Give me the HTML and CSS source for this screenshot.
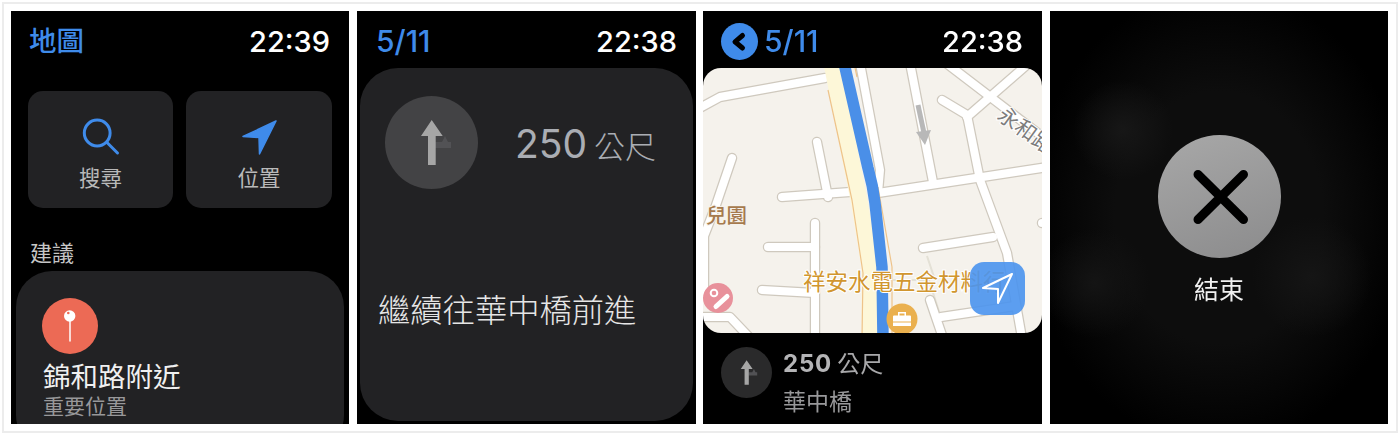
FILE: index.html
```html
<!DOCTYPE html>
<html lang="zh-Hant">
<head>
<meta charset="utf-8">
<title>Apple Watch 地圖</title>
<link rel="stylesheet" href="styles.css">
</head>
<body>
<svg class="defs" width="0" height="0" aria-hidden="true">
  <symbol id="turn" viewBox="0 0 93 93">
    <path class="turn-stub" d="M50 46h16v6H50z M57 46l3-6 3 6z"/>
    <path class="turn-arrow" d="M46.700 24 57.700 40H50.700V69H43V40H36Z"/>
  </symbol>
</svg>
<main class="frame">
  <section class="panel">
    <header class="bar">
      <span class="title strong">地圖</span>
      <span class="time">22:39</span>
    </header>
    <div class="actions">
      <div class="action">
        <svg class="action-icon" viewBox="0 0 40 40"><circle class="stroke-blue" cx="16.200" cy="16" r="12.900"/><path class="stroke-blue" d="M26 25.500 36.500 36"/></svg>
        <span>搜尋</span>
      </div>
      <div class="action">
        <svg class="action-icon" viewBox="0 0 40 40"><path class="fill-blue" d="M37 4 4 19.500 20 20.500 20.500 37Z"/></svg>
        <span>位置</span>
      </div>
    </div>
    <h2 class="section">建議</h2>
    <article class="suggestion">
      <div class="pin">
        <svg viewBox="0 0 56 56"><path class="pin-needle" d="M28 22V43"/><circle class="pin-head" cx="27.700" cy="18" r="5.700"/><circle class="pin-glint" cx="26.300" cy="15" r="1.300"/></svg>
      </div>
      <div class="place">錦和路附近</div>
      <div class="place-sub">重要位置</div>
    </article>
  </section>

  <section class="panel panel-wide">
    <header class="bar">
      <span class="title">5/11</span>
      <span class="time">22:38</span>
    </header>
    <article class="step">
      <div class="step-top">
        <div class="step-circle"><svg viewBox="0 0 93 93"><use href="#turn"/></svg></div>
        <div class="step-dist">250<span class="step-unit">公尺</span></div>
      </div>
      <p class="step-text">繼續往華中橋前進</p>
    </article>
  </section>

  <section class="panel panel-wide">
    <header class="bar bar-back">
      <span class="back"><svg viewBox="0 0 37 37"><path d="M21.500 12.500 14 18.800 21.500 25"/></svg></span>
      <span class="title">5/11</span>
      <span class="time">22:38</span>
    </header>
    <div class="map">
      <svg class="map-art" viewBox="0 0 339 265">
        <defs>
          <g id="roads">
            <path d="M-5 41 17 29 122 10"/>
            <path d="M29 90 12 140 1 168V225"/>
            <path d="M114 74 125 129"/>
            <path d="M79 129 147 124"/>
            <path d="M157 -5 177 102 175 125"/>
            <path d="M175 125 345 99"/>
            <path d="M207 -5 230 114"/>
            <path d="M243 -5 345 73"/>
            <path d="M326 -5 264 49"/>
            <path d="M239 32 264 47 277 112 304 185 319 270"/>
            <path d="M345 155H339"/>
            <path d="M220 180 290 169"/>
            <path d="M112 155V270"/>
            <path d="M65 179H112"/>
            <path d="M59 222 112 225"/>
            <path d="M-5 249H27L47 270"/>
            <path d="M227 232 240 270"/>
            <path d="M238 249 312 238"/>
          </g>
        </defs>
        <rect class="map-ground" width="339" height="265"/>
        <path class="road-faint" d="M224 188 232 212 M190 212H226L238 250"/>
        <use class="road-casing" href="#roads"/>
        <use class="road-fill" href="#roads"/>
        <path class="highway" d="M129 -5 147 87 156 132 167 199V270"/>
        <path class="highway-edge" d="M125 22 144 109 149 132 160 205 159 270 M175 119 189 199V270 M151 -5 154 9"/>
        <path class="route" d="M141 -5 165 100Q170 118 172 135L179 199 180 270"/>
        <path class="map-arrow-shaft" d="M215 37 221 65"/>
        <path class="map-arrow-head" d="M213 64 228 62 222 77Z"/>
        <text class="label-park" x="3" y="155">兒園</text>
        <text class="label-road" transform="translate(293 50) rotate(36)">永和路</text>
        <text class="label-shop" x="100" y="222">祥安水電五金材料行</text>
        <circle class="poi-pharmacy" cx="15" cy="230" r="15"/>
        <path class="poi-pill" d="M13 238.500 24 228.500"/>
        <circle class="poi-dot" cx="11" cy="225" r="3.300"/>
        <circle class="poi-shop" cx="199" cy="251" r="15.500"/>
        <path class="poi-bag" d="M191 247.500h16a1 1 0 0 1 1 1v5h-18v-5a1 1 0 0 1 1-1z M190 254.500h18v3.500h-18z M195 247.500v-3.500h8v3.500h-1.500v-2h-5v2z"/>
      </svg>
      <div class="locate">
        <svg viewBox="0 0 55 53"><path d="M42 12 13 26 28 27 28 41Z"/></svg>
      </div>
    </div>
    <div class="next">
      <div class="next-circle"><svg viewBox="0 0 93 93"><use href="#turn"/></svg></div>
      <div class="next-body">
        <div class="next-dist"><b>250</b> 公尺</div>
        <div class="next-name">華中橋</div>
      </div>
    </div>
  </section>

  <section class="panel panel-end">
    <div class="end-btn">
      <svg viewBox="0 0 123 123"><path d="M40 39.500 85.500 84.500M85.500 39.500 40 84.500"/></svg>
    </div>
    <div class="end-label">結束</div>
  </section>
</main>
</body>
</html>
```

FILE: styles.css
```css
* { box-sizing: border-box; }
html, body { margin: 0; padding: 0; background: #fff; }
body {
  width: 1400px;
  height: 435px;
  overflow: hidden;
  font-family: "Noto Sans CJK TC", "Noto Sans", sans-serif;
}
.defs { position: absolute; }
.frame {
  display: flex;
  gap: 8px;
  width: 1396px;
  height: 431px;
  margin: 2px;
  padding: 7px 8px 7px 7px;
  border: 2px solid #ececec;
  filter: blur(0.35px);
}
.panel {
  flex: 0 0 338px;
  height: 413px;
  background: #000;
  overflow: hidden;
  color: #fff;
}
.panel-wide { flex-basis: 339px; margin-right: -1px; }
.panel-wide + .panel-wide { margin-right: 0; }
.bar {
  display: flex;
  align-items: center;
  justify-content: space-between;
  height: 57px;
  padding: 3px 19px 0;
}
.title {
  color: #3f8bea;
  font: 500 30px/1 Inter, "Noto Sans CJK TC", sans-serif;
}
.title.strong {
  margin: 0 0 2px -1px;
  font-family: "Noto Sans CJK TC", sans-serif;
  font-weight: 500;
  font-size: 27.500px;
}
.time {
  font: 500 29px/1 Inter, sans-serif;
}

/* panel 1 */
.actions {
  display: grid;
  grid-template-columns: 145px 146px;
  gap: 13px;
  margin: 23px 0 0 17px;
}
.action {
  display: flex;
  flex-direction: column;
  align-items: center;
  height: 117px;
  padding-top: 26px;
  border-radius: 15px;
  background: #222224;
  color: #b9b9b9;
  font-size: 21.500px;
  line-height: 30px;
}
.action-icon { width: 40px; height: 40px; margin-bottom: 5px; }
.stroke-blue { fill: none; stroke: #3f8bea; stroke-width: 3; stroke-linecap: round; }
.fill-blue { fill: #3f8bea; stroke: #3f8bea; stroke-width: 1.500; stroke-linejoin: round; }
.section {
  margin: 28px 0 0 19px;
  color: #c6c6c6;
  font-size: 22px;
  font-weight: 400;
  line-height: 30px;
}
.suggestion {
  height: 180px;
  margin: 5px 5px 0;
  padding: 27px 0 0 26px;
  border-radius: 36px;
  background: #222224;
}
.pin { width: 56px; height: 56px; border-radius: 50%; background: #ec6a55; }
.pin svg { display: block; width: 56px; height: 56px; }
.pin-needle { stroke: #fff; stroke-width: 1.500; stroke-linecap: round; }
.pin-head { fill: #fff; }
.pin-glint { fill: #ec6a55; }
.place {
  margin: 5px 0 0 1px;
  font-size: 27.500px;
  line-height: 32px;
  color: #f0f0f0;
}
.place-sub {
  margin: 1px 0 0 1px;
  font-size: 21px;
  line-height: 26px;
  color: #98989a;
}

/* panel 2 */
.step {
  height: 353px;
  margin: 0 3px;
  padding: 28px 0 0 25px;
  border-radius: 38px;
  background: #222224;
}
.step-top { display: flex; align-items: center; }
.step-circle {
  flex: none;
  width: 93px;
  height: 93px;
  border-radius: 50%;
  background: #434345;
}
.step-circle svg { display: block; width: 93px; height: 93px; }
.turn-arrow { fill: #a6a6a6; }
.turn-stub { fill: #525255; }
.step-dist {
  margin: 2px 0 0 37px;
  color: #aaadb3;
  font: 400 39px/1 Inter, sans-serif;
}
.step-unit {
  margin-left: 7px;
  font: 300 31px/1 "Noto Sans CJK TC", sans-serif;
}
.step-text {
  margin: 97px 0 0 -7px;
  color: #e6e6e6;
  font-size: 32.300px;
  font-weight: 300;
  line-height: 44px;
}

/* panel 3 */
.bar-back { justify-content: flex-start; padding-left: 18px; }
.back {
  flex: none;
  width: 37px;
  height: 37px;
  margin-right: 6px;
  border-radius: 50%;
  background: #3f8bea;
}
.back svg { display: block; width: 37px; height: 37px; }
.back path { fill: none; stroke: #000; stroke-width: 5; stroke-linecap: round; stroke-linejoin: round; }
.bar-back .time { margin-left: auto; }
.map {
  position: relative;
  height: 265px;
  overflow: hidden;
  border-radius: 18px;
}
.map-art { display: block; width: 339px; height: 265px; }
.map-ground { fill: #f5f2ec; }
.road-casing { fill: none; stroke: #cfc9be; stroke-width: 10.500; stroke-linecap: round; stroke-linejoin: round; }
.road-fill { fill: none; stroke: #fff; stroke-width: 8; stroke-linecap: round; stroke-linejoin: round; }
.road-faint { fill: none; stroke: #e4e1d6; stroke-width: 2; }
.highway { fill: none; stroke: #fdf7d8; stroke-width: 17; }
.highway-edge { fill: none; stroke: #eec38a; stroke-width: 1.200; }
.route { fill: none; stroke: #4a8fe8; stroke-width: 11.500; }
.map-arrow-shaft { fill: none; stroke: #b8b8b8; stroke-width: 5; }
.map-arrow-head { fill: #b8b8b8; }
.label-park {
  fill: #a67a4d;
  font-size: 20.500px;
  font-weight: 500;
  paint-order: stroke;
  stroke: #f5f2ec;
  stroke-width: 2px;
}
.label-road {
  fill: #7d7d7d;
  font-size: 21px;
  paint-order: stroke;
  stroke: #fff;
  stroke-width: 2px;
}
.label-shop {
  fill: #d1962f;
  font-size: 22.500px;
  paint-order: stroke;
  stroke: #fff;
  stroke-width: 2px;
}
.poi-pharmacy { fill: #e8919b; }
.poi-pill { fill: none; stroke: #fff; stroke-width: 5; stroke-linecap: round; }
.poi-dot { fill: none; stroke: #fff; stroke-width: 2; }
.poi-shop { fill: #eab04e; }
.poi-bag { fill: #fff; }
.locate {
  position: absolute;
  left: 267px;
  top: 194px;
  width: 55px;
  height: 53px;
  border-radius: 14px;
  background: rgba(74, 148, 238, 0.9);
}
.locate svg { display: block; width: 55px; height: 53px; }
.locate path { fill: none; stroke: #fff; stroke-width: 2; stroke-linejoin: round; }
.next { display: flex; padding: 14px 0 0 18px; }
.next-circle {
  flex: none;
  width: 51px;
  height: 51px;
  border-radius: 50%;
  background: #2a2a2b;
}
.next-circle svg { display: block; width: 51px; height: 51px; }
.next-body { margin-left: 11px; }
.next-dist {
  margin-top: -3px;
  color: #a8a8aa;
  font-size: 23px;
  line-height: 36px;
}
.next-dist b { font: 700 24px/1 Inter, sans-serif; letter-spacing: 0.8px; color: #b4b4b6; }
.next-name {
  margin-top: 2px;
  color: #98989a;
  font-size: 23px;
  line-height: 36px;
}

/* panel 4 */
.panel-end {
  display: flex;
  flex-direction: column;
  align-items: center;
  padding-top: 124px;
  background:
    radial-gradient(circle 50px at 73px 119px, #171717, transparent),
    radial-gradient(circle 55px at 45px 272px, #141414, transparent),
    radial-gradient(circle 60px at 262px 266px, #151515, transparent),
    radial-gradient(ellipse 190px 230px at 50% 50%, #0d0d0d 55%, #000 100%);
}
.end-btn {
  width: 123px;
  height: 123px;
  border-radius: 50%;
  background: linear-gradient(160deg, #a8a8a8, #8b8b8c);
}
.end-btn svg { display: block; width: 123px; height: 123px; }
.end-btn path { fill: none; stroke: #000; stroke-width: 9; stroke-linecap: round; }
.end-label {
  margin-top: 12px;
  color: #f0f0f0;
  font-size: 25px;
  line-height: 36px;
  font-weight: 400;
}
```
